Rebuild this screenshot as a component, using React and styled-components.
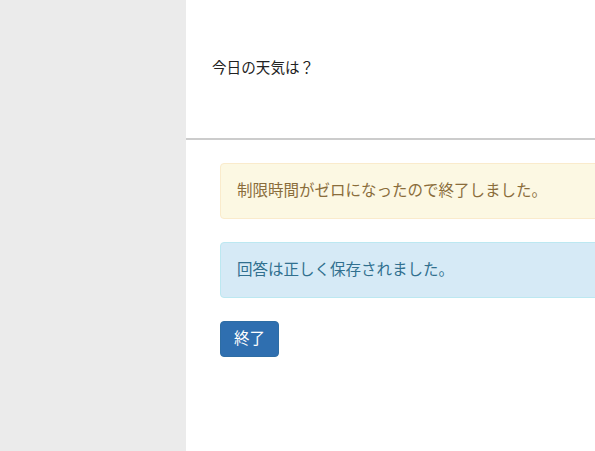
import React from 'react';
import styled, { createGlobalStyle } from 'styled-components';

const GlobalStyle = createGlobalStyle`
html, body {
  margin: 0;
  padding: 0;
  overflow: hidden;
  background: #fff;
}
body {
  font-family: "Helvetica Neue", "Liberation Sans", "Noto Sans CJK JP", sans-serif;
  color: #333;
}
`;

const Page = styled.div`
display: flex;
width: 595px;
height: 451px;
`;

const Sidebar = styled.aside`
flex: 0 0 186px;
background: #ebebeb;
`;

const Main = styled.main`
flex: 1 1 auto;
display: flex;
flex-direction: column;
min-width: 0;
`;

const Question = styled.header`
height: 140px;
box-sizing: border-box;
border-bottom: 2px solid #cccccc;
padding: 58px 26px 0 26px;
font-size: 14.6px;
line-height: 20px;
color: #222;
`;

const Body = styled.section`
padding: 23px 0 0 34px;
width: 560px;
`;

const Alert = styled.div`
box-sizing: border-box;
height: 56px;
padding: 15px 16px;
margin-bottom: 23px;
border: 1px solid ${props => props.border};
border-radius: 4px;
background: ${props => props.bg};
color: ${props => props.color};
font-size: 15.5px;
line-height: 24px;
`;

const FinishButton = styled.button`
font-family: inherit;
font-size: 15.5px;
line-height: 22px;
padding: 6px 13px;
color: #fff;
background: #2f6fb0;
border: 1px solid #2e6da4;
border-radius: 4px;
cursor: pointer;
`;

export default function App() {
  return (
    <>
      <GlobalStyle />
      <Page>
        <Sidebar />
        <Main>
          <Question>今日の天気は？</Question>
          <Body>
            <Alert bg="#fcf8e3" border="#faebcc" color="#8a6d3b">
              制限時間がゼロになったので終了しました。
            </Alert>
            <Alert bg="#d6eaf6" border="#bce8f1" color="#31708f">
              回答は正しく保存されました。
            </Alert>
            <FinishButton>終了</FinishButton>
          </Body>
        </Main>
      </Page>
    </>
  );
}
